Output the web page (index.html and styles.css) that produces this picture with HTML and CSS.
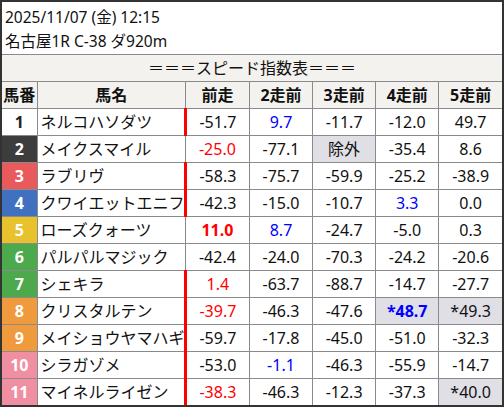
FILE: index.html
```html
<!DOCTYPE html>
<html lang="ja">
<head>
<meta charset="utf-8">
<title>スピード指数表</title>
<link rel="stylesheet" href="styles.css">
</head>
<body>
<div class="frame">
  <div class="info">
    <div class="info-line">2025/11/07 (金) 12:15</div>
    <div class="info-line">名古屋1R C-38 ダ920m</div>
  </div>
  <table class="speed">
    <colgroup>
      <col class="c-no"><col class="c-name"><col class="c-v1"><col class="c-v"><col class="c-v"><col class="c-v"><col class="c-v">
    </colgroup>
    <thead>
      <tr><th class="caption" colspan="7">＝＝＝スピード指数表＝＝＝</th></tr>
      <tr class="head"><th>馬番</th><th>馬名</th><th>前走</th><th>2走前</th><th>3走前</th><th>4走前</th><th>5走前</th></tr>
    </thead>
    <tbody>
      <tr><td class="no w1">1</td><td class="name">ネルコハソダツ</td><td class="v mark">-51.7</td><td class="v blue">9.7</td><td class="v">-11.7</td><td class="v">-12.0</td><td class="v">49.7</td></tr>
      <tr><td class="no w2">2</td><td class="name">メイクスマイル</td><td class="v red">-25.0</td><td class="v">-77.1</td><td class="v gray">除外</td><td class="v">-35.4</td><td class="v">8.6</td></tr>
      <tr><td class="no w3">3</td><td class="name">ラブリヴ</td><td class="v mark">-58.3</td><td class="v">-75.7</td><td class="v">-59.9</td><td class="v">-25.2</td><td class="v">-38.9</td></tr>
      <tr><td class="no w4">4</td><td class="name">クワイエットエニフ</td><td class="v mark">-42.3</td><td class="v">-15.0</td><td class="v">-10.7</td><td class="v blue">3.3</td><td class="v">0.0</td></tr>
      <tr><td class="no w5">5</td><td class="name">ローズクォーツ</td><td class="v red bold">11.0</td><td class="v blue">8.7</td><td class="v">-24.7</td><td class="v">-5.0</td><td class="v">0.3</td></tr>
      <tr><td class="no w6">6</td><td class="name">パルパルマジック</td><td class="v">-42.4</td><td class="v">-24.0</td><td class="v">-70.3</td><td class="v">-24.2</td><td class="v">-20.6</td></tr>
      <tr><td class="no w6">7</td><td class="name">シェキラ</td><td class="v mark red">1.4</td><td class="v">-63.7</td><td class="v">-88.7</td><td class="v">-14.7</td><td class="v">-27.7</td></tr>
      <tr><td class="no w8">8</td><td class="name">クリスタルテン</td><td class="v mark red">-39.7</td><td class="v">-46.3</td><td class="v">-47.6</td><td class="v gray blue bold">*48.7</td><td class="v gray">*49.3</td></tr>
      <tr><td class="no w8">9</td><td class="name">メイショウヤマハギ</td><td class="v mark">-59.7</td><td class="v">-17.8</td><td class="v">-45.0</td><td class="v">-51.0</td><td class="v">-32.3</td></tr>
      <tr><td class="no w10">10</td><td class="name">シラガゾメ</td><td class="v mark">-53.0</td><td class="v blue">-1.1</td><td class="v">-46.3</td><td class="v">-55.9</td><td class="v">-14.7</td></tr>
      <tr><td class="no w10">11</td><td class="name">マイネルライゼン</td><td class="v mark red">-38.3</td><td class="v">-46.3</td><td class="v">-12.3</td><td class="v">-37.3</td><td class="v gray">*40.0</td></tr>
    </tbody>
  </table>
</div>
</body>
</html>
```
FILE: styles.css
```css
html, body {
  margin: 0;
  padding: 0;
  background: #ffffff;
}
body {
  font-family: "Noto Sans", "Noto Sans CJK JP", sans-serif;
  font-size: 16px;
  color: #111111;
}
.frame {
  width: 500px;
  border: 2px solid #333333;
  border-bottom-width: 3px;
  background: #ffffff;
}
.info {
  padding: 3px 0 3px 3px;
  height: 46px;
  font-size: 15.5px;
  border-bottom: 1px solid #8a8a8a;
}
.info-line {
  height: 24px;
  line-height: 24px;
  white-space: nowrap;
}
.speed {
  width: 500px;
  border-collapse: collapse;
  table-layout: fixed;
}
.c-no { width: 35px; }
.c-name { width: 148px; }
.c-v1 { width: 64px; }
.c-v { width: 63px; }
.speed th, .speed td {
  border: 1px solid #8a8a8a;
  padding: 0;
  height: 26px;
  line-height: 20px;
  white-space: nowrap;
  overflow: hidden;
}
.speed tr > :first-child { border-left: none; }
.speed tr > :last-child { border-right: none; }
.speed tbody tr:last-child td { border-bottom: none; }
.speed thead tr:first-child th { border-top: none; }
.caption {
  background: #f3f2ee;
  font-weight: normal;
  text-align: center;
  height: 25px;
}
.head th {
  background: #f3f2ee;
  font-weight: bold;
  text-align: center;
}
.no {
  text-align: center;
  font-weight: bold;
  color: #ffffff;
}
.w1 { background: #ffffff; color: #222222; }
.w2 { background: #3d3d3d; }
.w3 { background: #e85a5c; }
.w4 { background: #4070c0; }
.w5 { background: #e7c22c; }
.w6 { background: #4caa4c; }
.w8 { background: #f09a3e; }
.w10 { background: #f08ea2; }
.name {
  text-align: left;
  padding-left: 3px !important;
}
.v { text-align: center; }
.mark { border-left: 3px solid #ff0000 !important; }
.red { color: #ff0000; }
.blue { color: #0000ff; }
.bold { font-weight: bold; }
.gray { background: #dfdfe5; }
```
